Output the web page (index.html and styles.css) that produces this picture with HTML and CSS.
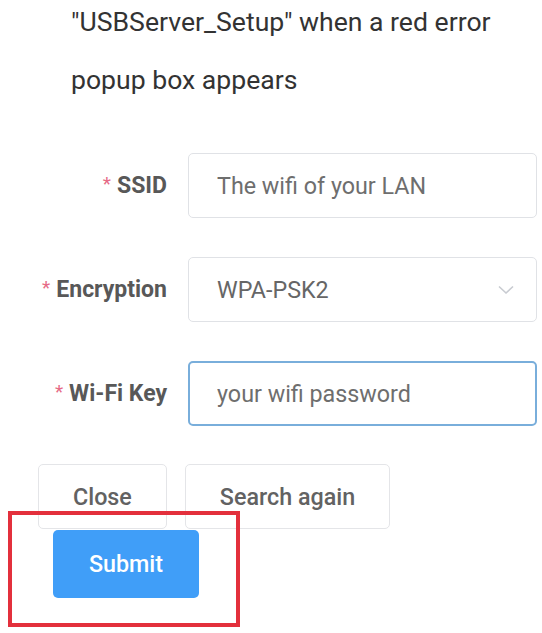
FILE: index.html
```html
<!DOCTYPE html>
<html lang="en">
<head>
    <meta charset="UTF-8">
    <meta name="viewport" content="width=device-width, initial-scale=1.0">
    <title>Wi-Fi Setup</title>
    <link rel="stylesheet" href="styles.css">
</head>
<body>
    <div class="page">
        <p class="intro">"USBServer_Setup" when a red error popup box appears</p>

        <form class="wifi-form" onsubmit="return false;">
            <div class="form-row">
                <label class="form-label" for="ssid"><span class="required">*</span>SSID</label>
                <input class="form-input" type="text" id="ssid" placeholder="The wifi of your LAN">
            </div>

            <div class="form-row">
                <label class="form-label"><span class="required">*</span>Encryption</label>
                <div class="form-input form-select">
                    <span>WPA-PSK2</span>
                    <svg class="select-arrow" width="16" height="10" viewBox="0 0 16 10">
                        <path d="M1 1.5 L8 8 L15 1.5" fill="none" stroke="#c8cbd1" stroke-width="1.6"/>
                    </svg>
                </div>
            </div>

            <div class="form-row">
                <label class="form-label" for="wifikey"><span class="required">*</span>Wi-Fi Key</label>
                <input class="form-input is-focus" type="text" id="wifikey" placeholder="your wifi password">
            </div>

            <div class="button-row">
                <button class="btn" type="button">Close</button>
                <button class="btn" type="button">Search again</button>
            </div>

            <div class="submit-row">
                <button class="btn btn-primary" type="submit">Submit</button>
                <div class="highlight-box"></div>
            </div>
        </form>
    </div>
</body>
</html>
```

FILE: styles.css
```css
body {
    margin: 0;
    background-color: #fff;
    font-family: Roboto, "Liberation Sans", Arial, sans-serif;
    color: #333;
}
.page {
    width: 542px;
    height: 633px;
    overflow: hidden;
}
.intro {
    margin: -7px 0 0;
    padding: 0 30px 0 71px;
    font-size: 26.6px;
    line-height: 58px;
    color: #333;
}
.wifi-form {
    margin-top: 44px;
}
.form-row {
    display: flex;
    align-items: center;
    height: 65px;
    margin-bottom: 39px;
}
.form-label {
    width: 167px;
    margin-right: 21px;
    text-align: right;
    font-size: 23px;
    font-weight: bold;
    color: #585858;
}
.required {
    position: relative;
    top: -3px;
    margin-right: 6px;
    font-size: 19px;
    font-weight: normal;
    color: #e66a86;
}
.form-input {
    width: 349px;
    height: 65px;
    box-sizing: border-box;
    padding: 0 28px;
    border: 1px solid #e0e2e6;
    border-radius: 5px;
    background-color: #fff;
    font-family: inherit;
    font-size: 23.3px;
    color: #666;
    outline: none;
}
.form-input::placeholder {
    color: #6e6e6e;
}
.form-input.is-focus {
    border: 2px solid #79aedb;
    padding-left: 27px;
}
.form-select {
    display: flex;
    align-items: center;
    justify-content: space-between;
    padding-right: 22px;
}
.button-row {
    display: flex;
    gap: 18px;
    padding-left: 38px;
    margin-top: -1px;
}
.btn {
    height: 65px;
    padding: 0 34px;
    border: 1px solid #e4e5e8;
    border-radius: 5px;
    background-color: #fff;
    font-family: inherit;
    font-size: 23.3px;
    font-weight: 500;
    color: #626262;
    cursor: pointer;
}
.submit-row {
    position: relative;
    padding-left: 53px;
    margin-top: 1px;
}
.btn-primary {
    width: 146px;
    height: 68px;
    padding: 0;
    border: none;
    background-color: #409ef8;
    color: #fff;
}
/* red annotation frame drawn over the submit button */
.highlight-box {
    position: absolute;
    left: 8px;
    top: -19px;
    width: 232px;
    height: 116px;
    box-sizing: border-box;
    border: 4px solid #e3303c;
}
```
